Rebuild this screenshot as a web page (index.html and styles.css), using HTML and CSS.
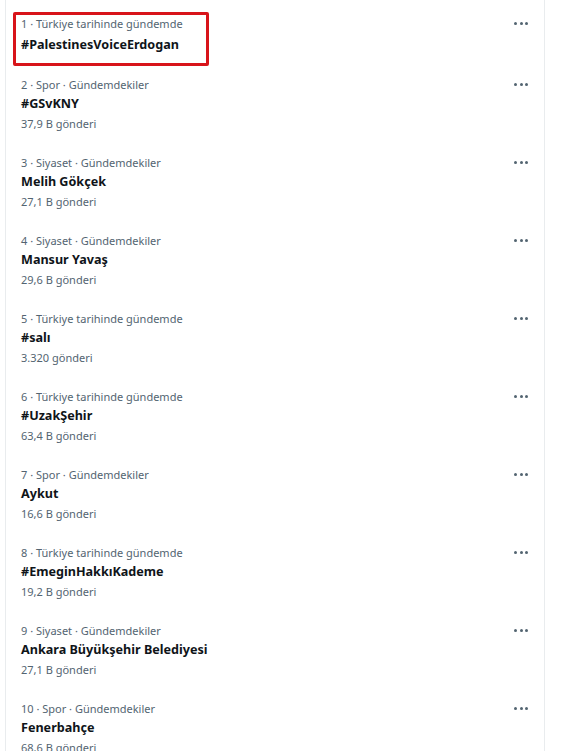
FILE: index.html
```html
<!DOCTYPE html>
<html lang="tr">
<head>
<meta charset="utf-8">
<link rel="stylesheet" href="styles.css">
</head>
<body>
<div class="panel">
  <div class="trend first">
    <div class="info">
      <div class="meta">1 · Türkiye tarihinde gündemde</div>
      <div class="title">#PalestinesVoiceErdogan</div>
    </div>
    <div class="more"><span></span><span></span><span></span></div>
    <div class="highlight"></div>
  </div>
  <div class="trend">
    <div class="info">
      <div class="meta">2 · Spor · Gündemdekiler</div>
      <div class="title">#GSvKNY</div>
      <div class="count">37,9 B gönderi</div>
    </div>
    <div class="more"><span></span><span></span><span></span></div>
  </div>
  <div class="trend">
    <div class="info">
      <div class="meta">3 · Siyaset · Gündemdekiler</div>
      <div class="title">Melih Gökçek</div>
      <div class="count">27,1 B gönderi</div>
    </div>
    <div class="more"><span></span><span></span><span></span></div>
  </div>
  <div class="trend">
    <div class="info">
      <div class="meta">4 · Siyaset · Gündemdekiler</div>
      <div class="title">Mansur Yavaş</div>
      <div class="count">29,6 B gönderi</div>
    </div>
    <div class="more"><span></span><span></span><span></span></div>
  </div>
  <div class="trend">
    <div class="info">
      <div class="meta">5 · Türkiye tarihinde gündemde</div>
      <div class="title">#salı</div>
      <div class="count">3.320 gönderi</div>
    </div>
    <div class="more"><span></span><span></span><span></span></div>
  </div>
  <div class="trend">
    <div class="info">
      <div class="meta">6 · Türkiye tarihinde gündemde</div>
      <div class="title">#UzakŞehir</div>
      <div class="count">63,4 B gönderi</div>
    </div>
    <div class="more"><span></span><span></span><span></span></div>
  </div>
  <div class="trend">
    <div class="info">
      <div class="meta">7 · Spor · Gündemdekiler</div>
      <div class="title">Aykut</div>
      <div class="count">16,6 B gönderi</div>
    </div>
    <div class="more"><span></span><span></span><span></span></div>
  </div>
  <div class="trend">
    <div class="info">
      <div class="meta">8 · Türkiye tarihinde gündemde</div>
      <div class="title">#EmeginHakkıKademe</div>
      <div class="count">19,2 B gönderi</div>
    </div>
    <div class="more"><span></span><span></span><span></span></div>
  </div>
  <div class="trend">
    <div class="info">
      <div class="meta">9 · Siyaset · Gündemdekiler</div>
      <div class="title">Ankara Büyükşehir Belediyesi</div>
      <div class="count">27,1 B gönderi</div>
    </div>
    <div class="more"><span></span><span></span><span></span></div>
  </div>
  <div class="trend">
    <div class="info">
      <div class="meta">10 · Spor · Gündemdekiler</div>
      <div class="title">Fenerbahçe</div>
      <div class="count">68,6 B gönderi</div>
    </div>
    <div class="more"><span></span><span></span><span></span></div>
  </div>
</div>
</body>
</html>
```

FILE: styles.css
```css
html, body {
  margin: 0;
  padding: 0;
  background: #ffffff;
  height: 751px;
  overflow: hidden;
}

body {
  font-family: "Noto Sans", "Open Sans", sans-serif;
  color: #0f1419;
}

.panel {
  margin-left: 5px;
  width: 538px;
  border-left: 1px solid #e9ecee;
  border-right: 1px solid #e9ecee;
  min-height: 751px;
}

.trend {
  position: relative;
  display: flex;
  align-items: flex-start;
  padding: 10px 16px 10px 15px;
}

.trend.first {
  padding-top: 15px;
  padding-bottom: 11px;
}

.info {
  flex: 1;
  display: flex;
  flex-direction: column;
}

.meta {
  font-size: 11px;
  line-height: 18px;
  color: #536471;
}

.title {
  font-size: 12.6px;
  font-weight: 700;
  line-height: 20px;
  color: #0f1419;
}

.first .title {
  margin-top: 2px;
}

.count {
  font-size: 11px;
  line-height: 20px;
  color: #536471;
}

.more {
  display: flex;
  gap: 2.5px;
  margin-top: 7px;
}

.more span {
  width: 3px;
  height: 3px;
  border-radius: 50%;
  background: #536471;
}

.highlight {
  position: absolute;
  left: 7px;
  top: 12px;
  width: 190px;
  height: 48px;
  border: 3px solid #d8141a;
  border-radius: 2px;
}
```
